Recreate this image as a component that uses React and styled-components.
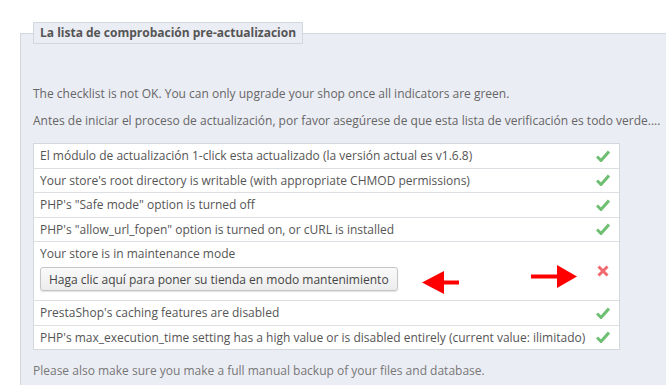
import React from 'react';
import styled, { createGlobalStyle } from 'styled-components';

const GlobalStyle = createGlobalStyle`
  html, body {
    margin: 0;
    padding: 0;
    background: #fff;
    overflow: hidden;
  }
  body {
    font-family: "Open Sans", "Liberation Sans", sans-serif;
    font-size: 12px;
    color: #555;
  }
`;

const Page = styled.div`
  padding: 22px 0 0 20px;
`;

const Panel = styled.fieldset`
  margin: 0;
  width: 700px;
  padding: 41px 12px 20px 12px;
  border: 1px solid #d3d8db;
  background: #ebedf4;
  box-sizing: border-box;
`;

const Legend = styled.legend`
  padding: 0 6px;
  line-height: 20px;
  border: 1px solid #d3d8db;
  background: #ebedf4;
  font-weight: bold;
  color: #555;
`;

const Note = styled.p`
  margin: 0 0 ${(p) => p.$gap || 9}px 0;
  line-height: 18px;
  color: ${(p) => p.$muted ? '#777' : '#666'};
`;

const List = styled.div`
  position: relative;
  width: 587px;
  box-sizing: border-box;
  border: 1px solid #d3d8db;
  background: #fff;
  margin-bottom: 12px;
`;

const Row = styled.div`
  display: flex;
  align-items: center;
  justify-content: space-between;
  padding: 3px 6px;
  line-height: 17.5px;
  border-top: ${(p) => p.$first ? 'none' : '1px solid #dcdfe3'};
  color: #555;
`;

const RowBody = styled.div`
  display: flex;
  flex-direction: column;
  align-items: flex-start;
  gap: 4.5px;
  padding-bottom: ${(p) => p.$tall ? 6 : 0}px;
`;

const Button = styled.button`
  height: 24px;
  padding: 0 8px;
  font-family: inherit;
  font-size: 12px;
  color: #444;
  border: 1px solid #c5c5c5;
  border-radius: 3px;
  background: linear-gradient(#fafafa, #ececec);
  box-shadow: 0 1px 1px rgba(0, 0, 0, 0.12);
`;

const IconBox = styled.span`
  display: flex;
  width: 16px;
  justify-content: center;
  margin-right: 2px;
`;

const Arrow = styled.svg`
  position: absolute;
  left: ${(p) => p.$x}px;
  top: ${(p) => p.$y}px;
`;

const Check = () => (
  <IconBox>
    <svg width="14" height="12" viewBox="0 0 14 12">
      <path d="M1 6.5 L5 10.5 L13 1.5" fill="none" stroke="#6fbf73" strokeWidth="3" strokeLinejoin="miter" />
    </svg>
  </IconBox>
);

const Cross = () => (
  <IconBox>
    <svg width="12" height="12" viewBox="0 0 12 12">
      <path d="M1.5 1.5 L10.5 10.5 M10.5 1.5 L1.5 10.5" stroke="#f06a70" strokeWidth="3" />
    </svg>
  </IconBox>
);

const items = [
  'El módulo de actualización 1-click esta actualizado (la versión actual es v1.6.8)',
  "Your store's root directory is writable (with appropriate CHMOD permissions)",
  'PHP\'s "Safe mode" option is turned off',
  'PHP\'s "allow_url_fopen" option is turned on, or cURL is installed',
];

const after = [
  "PrestaShop's caching features are disabled",
  "PHP's max_execution_time setting has a high value or is disabled entirely (current value: ilimitado)",
];

export default function App() {
  return (
    <Page>
      <GlobalStyle />
      <Panel>
        <Legend>La lista de comprobación pre-actualizacion</Legend>
        <Note>The checklist is not OK. You can only upgrade your shop once all indicators are green.</Note>
        <Note $gap={13}>Antes de iniciar el proceso de actualización, por favor asegúrese de que esta lista de verificación es todo verde....</Note>
        <List>
          {items.map((t, i) => (
            <Row key={t} $first={i === 0}>
              <span>{t}</span>
              <Check />
            </Row>
          ))}
          <Row>
            <RowBody $tall>
              <span>Your store is in maintenance mode</span>
              <Button>Haga clic aquí para poner su tienda en modo mantenimiento</Button>
            </RowBody>
            <Cross />
          </Row>
          {after.map((t) => (
            <Row key={t}>
              <span>{t}</span>
              <Check />
            </Row>
          ))}
          <Arrow $x={388} $y={127} width="38" height="23" viewBox="0 0 38 23">
            <polygon points="0,11.5 22,0 22,23" fill="#f00" />
            <rect x="21" y="9.5" width="16" height="4" fill="#f00" />
          </Arrow>
          <Arrow $x={497} $y={121} width="47" height="23" viewBox="0 0 47 23">
            <rect x="0" y="9.5" width="27" height="4" fill="#f00" />
            <polygon points="26,0 46,11.5 26,23" fill="#f00" />
          </Arrow>
        </List>
        <Note $muted $gap={0}>Please also make sure you make a full manual backup of your files and database.</Note>
      </Panel>
    </Page>
  );
}
